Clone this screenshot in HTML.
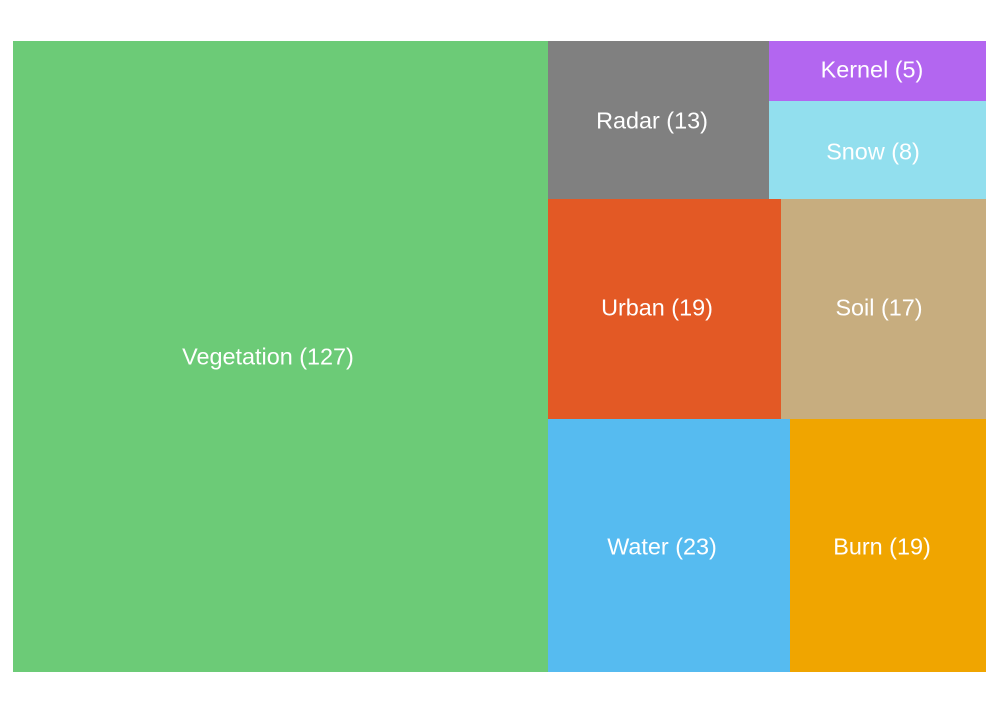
<!DOCTYPE html>
<html><head><meta charset="utf-8"><style>
html,body{margin:0;padding:0;background:#fff;width:1000px;height:714px;overflow:hidden}
.b{position:absolute;font-family:"Liberation Sans",sans-serif;font-size:23.4px;color:#fff}
.t{position:absolute;transform:translate(-50%,-50%);white-space:nowrap}
</style></head><body>
<div class="b" style="left:13px;top:41px;width:535px;height:631px;background:#6ccb77"></div>
<div class="b" style="left:548px;top:41px;width:221px;height:158px;background:#808080"></div>
<div class="b" style="left:769px;top:41px;width:217px;height:60px;background:#b366f0"></div>
<div class="b" style="left:769px;top:101px;width:217px;height:98px;background:#92dfee"></div>
<div class="b" style="left:548px;top:199px;width:233px;height:220px;background:#e35925"></div>
<div class="b" style="left:781px;top:199px;width:205px;height:220px;background:#c7ad7f"></div>
<div class="b" style="left:548px;top:419px;width:242px;height:253px;background:#56bbf0"></div>
<div class="b" style="left:790px;top:419px;width:196px;height:253px;background:#f0a500"></div>
<div class="b t" style="left:268px;top:357px">Vegetation (127)</div>
<div class="b t" style="left:652px;top:121px">Radar (13)</div>
<div class="b t" style="left:872px;top:70px">Kernel (5)</div>
<div class="b t" style="left:873px;top:152px">Snow (8)</div>
<div class="b t" style="left:657px;top:308px">Urban (19)</div>
<div class="b t" style="left:879px;top:308px">Soil (17)</div>
<div class="b t" style="left:662px;top:547px">Water (23)</div>
<div class="b t" style="left:882px;top:547px">Burn (19)</div>
</body></html>
